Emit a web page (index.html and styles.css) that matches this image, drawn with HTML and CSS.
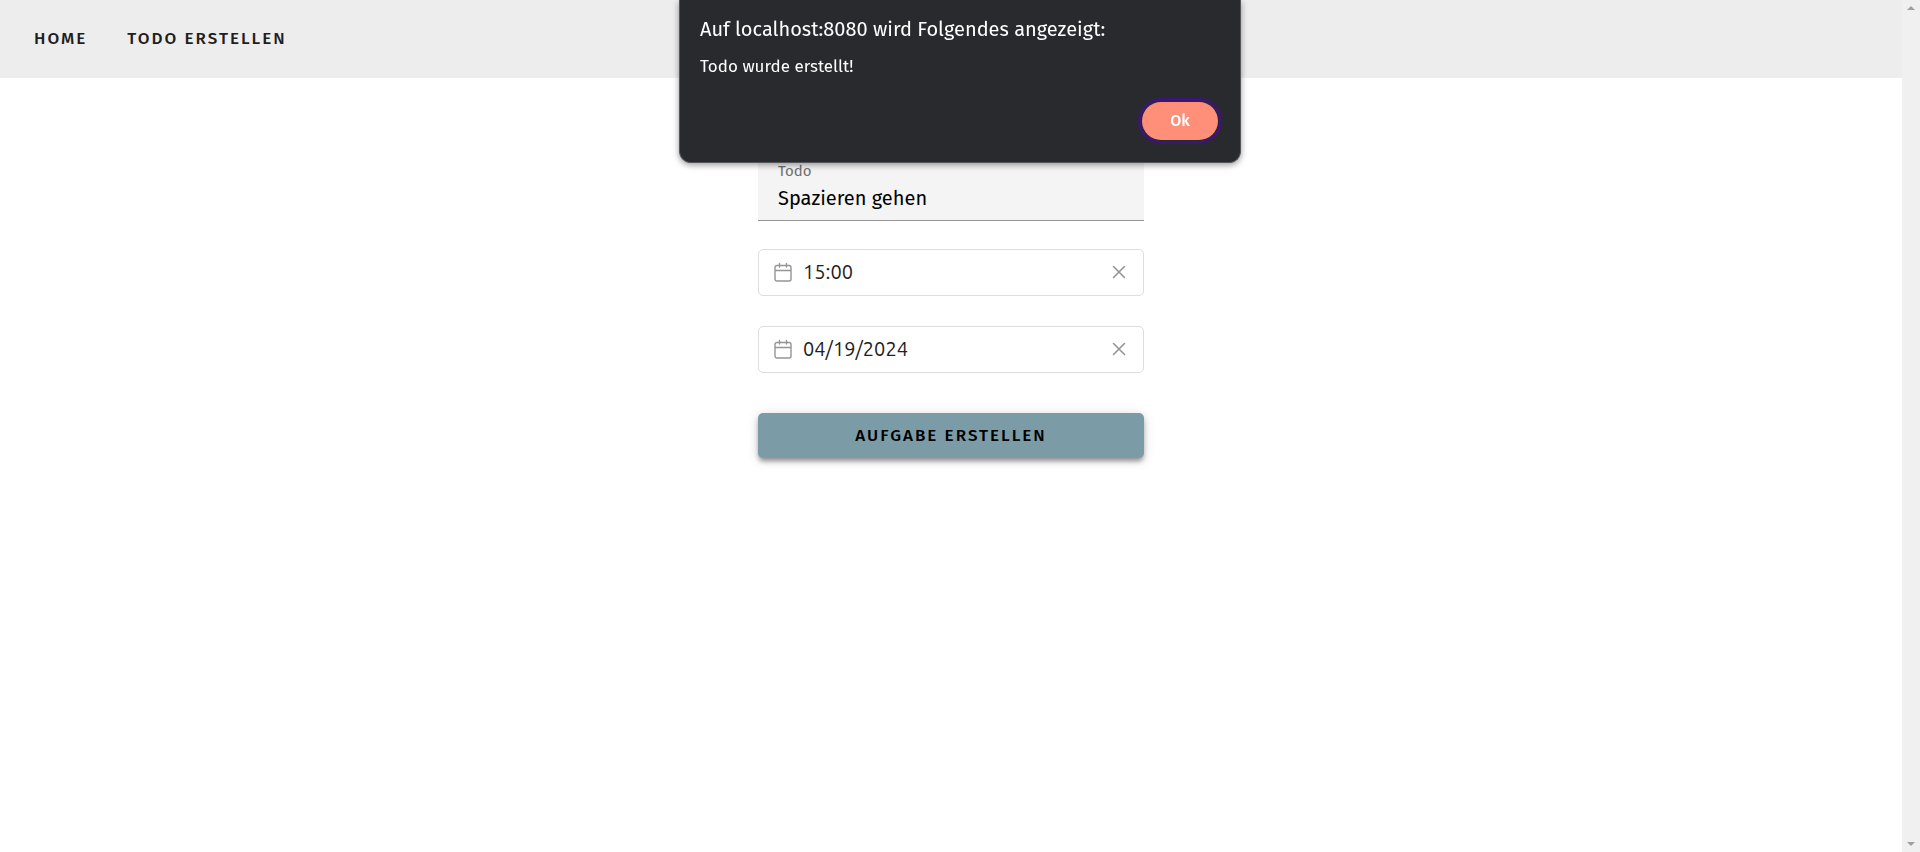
FILE: index.html
```html
<!DOCTYPE html>
<html lang="de">
<head>
<meta charset="utf-8">
<title>Todo erstellen</title>
<link rel="stylesheet" href="styles.css">
</head>
<body>
<div class="page">
  <header class="toolbar">
    <nav class="nav">
      <a class="nav-link" href="#home">HOME</a>
      <a class="nav-link" href="#create">TODO ERSTELLEN</a>
    </nav>
  </header>
  <main class="content">
    <form class="todo-form">
      <div class="text-field">
        <label class="field-label" for="todo">Todo</label>
        <input class="field-input" id="todo" type="text" value="Spazieren gehen">
      </div>
      <div class="picker">
        <svg class="calendar" viewBox="0 0 18 20" aria-hidden="true"><path d="M3 3.500H15a2 2 0 0 1 2 2V17a2 2 0 0 1-2 2H3a2 2 0 0 1-2-2V5.500a2 2 0 0 1 2-2ZM1 8.500H17M5.500 1.500V5M12.500 1.500V5"/></svg>
        <input class="picker-input" type="text" value="15:00" aria-label="Uhrzeit">
        <button class="clear" type="button" aria-label="Uhrzeit löschen"><svg class="cross" viewBox="0 0 14 14"><path d="M1.500 1.500 12.500 12.500M12.500 1.500 1.500 12.500"/></svg></button>
      </div>
      <div class="picker">
        <svg class="calendar" viewBox="0 0 18 20" aria-hidden="true"><path d="M3 3.500H15a2 2 0 0 1 2 2V17a2 2 0 0 1-2 2H3a2 2 0 0 1-2-2V5.500a2 2 0 0 1 2-2ZM1 8.500H17M5.500 1.500V5M12.500 1.500V5"/></svg>
        <input class="picker-input" type="text" value="04/19/2024" aria-label="Datum">
        <button class="clear" type="button" aria-label="Datum löschen"><svg class="cross" viewBox="0 0 14 14"><path d="M1.500 1.500 12.500 12.500M12.500 1.500 1.500 12.500"/></svg></button>
      </div>
      <button class="submit" type="button">AUFGABE ERSTELLEN</button>
    </form>
  </main>
</div>
<div class="scroll-track" aria-hidden="true">
  <svg class="arrow" viewBox="0 0 8 4"><path d="M0 4 4 0 8 4Z"/></svg>
  <svg class="arrow" viewBox="0 0 8 4"><path d="M0 0H8L4 4Z"/></svg>
</div>
<section class="dialog" role="alertdialog" aria-labelledby="dialog-title" aria-describedby="dialog-text">
  <h2 class="dialog-title" id="dialog-title">Auf localhost:8080 wird Folgendes angezeigt:</h2>
  <p class="dialog-text" id="dialog-text">Todo wurde erstellt!</p>
  <button class="dialog-ok" type="button">Ok</button>
</section>
</body>
</html>
```
FILE: styles.css
```css
* { box-sizing: border-box; }
body {
  margin: 0;
  min-height: 100vh;
  display: flex;
  background: #fff;
  color: #1e1e1e;
  font-family: "Fira Sans", "Noto Sans", sans-serif;
}
button, input { font-family: inherit; margin: 0; }
.page { flex: 1; min-width: 0; }
.toolbar {
  display: flex;
  align-items: center;
  height: 78px;
  padding: 0 34px;
  background: #ededed;
}
.nav { display: flex; gap: 40px; }
.nav-link {
  color: #1e1e1e;
  font-size: 17px;
  font-weight: 500;
  line-height: 24px;
  letter-spacing: 2px;
  text-decoration: none;
}
.content {
  display: flex;
  justify-content: center;
  padding: 72px 20px 40px;
}
.todo-form {
  display: flex;
  flex-direction: column;
  width: 100%;
  max-width: 386px;
}
.text-field {
  display: flex;
  flex-direction: column;
  padding: 11px 20px 5px;
  margin-bottom: 28px;
  background: #f4f4f4;
  border-bottom: 1px solid #959595;
}
.field-label { font-size: 15px; line-height: 20px; color: #6f6f6f; }
.field-input {
  width: 100%;
  height: 34px;
  padding: 0;
  border: 0;
  outline: 0;
  background: none;
  color: #000;
  font-size: 20px;
}
.picker {
  display: flex;
  align-items: center;
  gap: 11px;
  height: 47px;
  padding: 0 15px 1px;
  margin-bottom: 30px;
  border: 1px solid #ddd;
  border-radius: 5px;
  background: #fff;
}
.calendar {
  width: 18px;
  height: 20px;
  flex: none;
  fill: none;
  stroke: #959595;
  stroke-width: 1.400;
  stroke-linecap: round;
}
.picker-input {
  flex: 1;
  min-width: 0;
  padding: 0;
  border: 0;
  outline: 0;
  background: none;
  color: #212121;
  font-family: Ubuntu, "Noto Sans", sans-serif;
  font-size: 20px;
  line-height: 28px;
}
.clear { display: flex; padding: 2px; border: 0; background: none; }
.cross {
  width: 14px;
  height: 14px;
  fill: none;
  stroke: #959595;
  stroke-width: 1.600;
  stroke-linecap: round;
}
.submit {
  height: 45px;
  margin-top: 10px;
  padding: 0 20px;
  border: 0;
  border-radius: 5px;
  background: #7b9ca7;
  box-shadow: 0 4px 5px -1px rgba(0, 0, 0, .38), 0 2px 12px rgba(0, 0, 0, .16);
  color: #000;
  font-size: 17px;
  font-weight: 500;
  letter-spacing: 2px;
}
.scroll-track {
  display: flex;
  flex-direction: column;
  align-items: center;
  justify-content: space-between;
  width: 18px;
  padding: 6px 0;
  background: #f0f0f0;
}
.arrow { width: 8px; height: 4px; fill: #a0a0a0; }
.dialog {
  position: fixed;
  top: 0;
  left: 50%;
  transform: translateX(-50%);
  display: flex;
  flex-direction: column;
  width: 562px;
  max-width: 100%;
  padding: 15px 22px 22px 20px;
  border: 1px solid #555659;
  border-top: 0;
  border-radius: 0 0 12px 12px;
  background: #292a2e;
  box-shadow: 0 2px 6px rgba(0, 0, 0, .4);
  color: #fff;
}
.dialog-title { margin: 0 0 12px; font-size: 20px; font-weight: 400; line-height: 28px; }
.dialog-text { margin: 0 0 23px; font-size: 17px; line-height: 24px; }
.dialog-ok {
  align-self: flex-end;
  width: 76px;
  height: 38px;
  padding: 0 0 1px;
  border: 0;
  border-radius: 19px;
  background: #ff8f79;
  box-shadow: 0 0 0 1px #292a2e, 0 0 0 4px #3c1673;
  color: #fff;
  font-size: 16px;
  font-weight: 500;
}
```
